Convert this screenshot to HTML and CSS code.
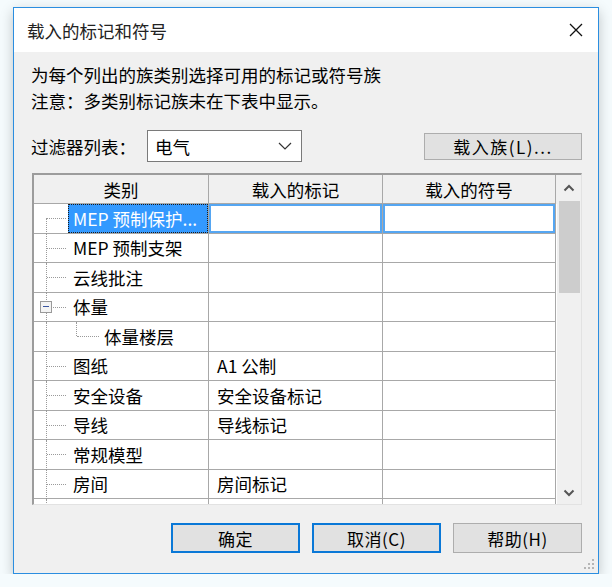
FILE: index.html
```html
<!DOCTYPE html>
<html lang="zh-CN">
<head>
    <meta charset="UTF-8">
    <title>载入的标记和符号</title>
    <link rel="stylesheet" href="styles.css">
</head>
<body>

    <div class="dialog">
        <!-- Barra de titulo -->
        <div class="titlebar">
            <span class="title">载入的标记和符号</span>
            <svg class="close" width="16" height="16" viewBox="0 0 16 16">
                <path d="M2 2 L14 14 M14 2 L2 14" stroke="#111" stroke-width="1.3" fill="none"/>
            </svg>
        </div>

        <div class="content">
            <p class="hint">为每个列出的族类别选择可用的标记或符号族</p>
            <p class="hint">注意：多类别标记族未在下表中显示。</p>

            <div class="filter-row">
                <label class="filter-label">过滤器列表：</label>
                <div class="select">
                    <span>电气</span>
                    <svg width="14" height="8" viewBox="0 0 14 8">
                        <path d="M1 1 L7 7 L13 1" stroke="#333" stroke-width="1.2" fill="none"/>
                    </svg>
                </div>
                <button class="btn btn-load">载入族(L)...</button>
            </div>

            <div class="grid-wrap">
                <div class="grid">
                    <div class="row head">
                        <div class="cell">类别</div>
                        <div class="cell">载入的标记</div>
                        <div class="cell">载入的符号</div>
                    </div>
                    <div class="row first">
                        <div class="cell tree"><span class="label sel">MEP 预制保护...</span></div>
                        <div class="cell edit"></div>
                        <div class="cell edit"></div>
                    </div>
                    <div class="row">
                        <div class="cell tree"><span class="label">MEP 预制支架</span></div>
                        <div class="cell"></div>
                        <div class="cell"></div>
                    </div>
                    <div class="row">
                        <div class="cell tree"><span class="label">云线批注</span></div>
                        <div class="cell"></div>
                        <div class="cell"></div>
                    </div>
                    <div class="row">
                        <div class="cell tree parent"><span class="toggle"></span><span class="label">体量</span></div>
                        <div class="cell"></div>
                        <div class="cell"></div>
                    </div>
                    <div class="row">
                        <div class="cell tree child"><span class="label">体量楼层</span></div>
                        <div class="cell"></div>
                        <div class="cell"></div>
                    </div>
                    <div class="row">
                        <div class="cell tree"><span class="label">图纸</span></div>
                        <div class="cell val">A1 公制</div>
                        <div class="cell"></div>
                    </div>
                    <div class="row">
                        <div class="cell tree"><span class="label">安全设备</span></div>
                        <div class="cell val">安全设备标记</div>
                        <div class="cell"></div>
                    </div>
                    <div class="row">
                        <div class="cell tree"><span class="label">导线</span></div>
                        <div class="cell val">导线标记</div>
                        <div class="cell"></div>
                    </div>
                    <div class="row">
                        <div class="cell tree"><span class="label">常规模型</span></div>
                        <div class="cell"></div>
                        <div class="cell"></div>
                    </div>
                    <div class="row">
                        <div class="cell tree"><span class="label">房间</span></div>
                        <div class="cell val">房间标记</div>
                        <div class="cell"></div>
                    </div>
                    <div class="row">
                        <div class="cell tree"><span class="label"></span></div>
                        <div class="cell"></div>
                        <div class="cell"></div>
                    </div>
                </div>

                <div class="scrollbar">
                    <div class="arrow up">
                        <svg width="12" height="8" viewBox="0 0 12 8"><path d="M1.5 6.5 L6 2 L10.5 6.5" stroke="#555" stroke-width="2" fill="none"/></svg>
                    </div>
                    <div class="thumb"></div>
                    <div class="track"></div>
                    <div class="arrow down">
                        <svg width="12" height="8" viewBox="0 0 12 8"><path d="M1.5 1.5 L6 6 L10.5 1.5" stroke="#555" stroke-width="2" fill="none"/></svg>
                    </div>
                </div>
            </div>

            <div class="actions">
                <button class="btn btn-default">确定</button>
                <button class="btn btn-default">取消(C)</button>
                <button class="btn">帮助(H)</button>
            </div>
        </div>

        <svg class="grip" width="12" height="12" viewBox="0 0 12 12">
            <rect x="9" y="1" width="2" height="2" fill="#b5b5b5"/>
            <rect x="5" y="5" width="2" height="2" fill="#b5b5b5"/>
            <rect x="9" y="5" width="2" height="2" fill="#b5b5b5"/>
            <rect x="1" y="9" width="2" height="2" fill="#b5b5b5"/>
            <rect x="5" y="9" width="2" height="2" fill="#b5b5b5"/>
            <rect x="9" y="9" width="2" height="2" fill="#b5b5b5"/>
        </svg>
    </div>

</body>
</html>
```

FILE: styles.css
```css
:root {
    --dialog-bg: #f0f0f0;
    --blue-border: #2b8ee0;
    --grid-line: #a8a8a8;
    --select-blue: #3399ff;
    --btn-bg: #e1e1e1;
}

* {
    box-sizing: border-box;
    margin: 0;
    padding: 0;
}

body {
    font-family: "Noto Sans CJK SC", "Noto Sans", sans-serif;
    font-size: 17.5px;
    color: #000;
    background-color: #f5fbfd;
    padding: 7px 0 0 13px;
}

.dialog {
    position: relative;
    width: 586px;
    height: 567px;
    background: var(--dialog-bg);
    border: 1px solid var(--blue-border);
    box-shadow: 0 4px 12px rgba(0, 0, 0, 0.22);
    display: flex;
    flex-direction: column;
}

.titlebar {
    height: 44px;
    background: #fff;
    display: flex;
    align-items: center;
    justify-content: space-between;
    padding: 0 14px 0 13px;
}

.title {
    color: #222;
}

.content {
    padding: 10px 16px 0 17px;
    display: flex;
    flex-direction: column;
}

.hint {
    line-height: 26px;
}

.filter-row {
    margin-top: 16px;
    height: 32px;
    display: flex;
    align-items: center;
}

.filter-label {
    width: 116px;
}

.select {
    width: 155px;
    height: 32px;
    background: #fff;
    border: 1px solid #7a7a7a;
    display: flex;
    align-items: center;
    justify-content: space-between;
    padding: 0 9px 0 7px;
}

.btn {
    font-family: inherit;
    font-size: 17px;
    color: #000;
    background: var(--btn-bg);
    border: 1px solid #adadad;
    letter-spacing: 0.5px;
}

.btn-load {
    margin-left: auto;
    width: 158px;
    height: 27px;
    letter-spacing: 1.5px;
}

/* tabla */
.grid-wrap {
    margin: 11px 0 0 1px;
    height: 332px;
    display: flex;
    border-top: 2px solid #9c9c9c;
    border-left: 2px solid #9c9c9c;
    border-right: 1px solid #e2e2e2;
    border-bottom: 1px solid #e2e2e2;
    background: #fff;
}

.grid {
    flex: 1;
    overflow: hidden;
}

.row {
    display: grid;
    grid-template-columns: 175px 174px 173px;
    height: 29.5px;
}

.cell {
    border-right: 1px solid var(--grid-line);
    border-bottom: 1px solid var(--grid-line);
    display: flex;
    align-items: center;
    white-space: nowrap;
    overflow: hidden;
}

.head {
    height: 29px;
    background: var(--dialog-bg);
}

.head .cell {
    justify-content: center;
}

.val {
    padding-left: 8px;
}

.edit {
    box-shadow: inset 0 0 0 2px #55a6f2;
}

.tree {
    position: relative;
    padding-left: 34px;
    overflow: visible;
}

.tree::before {
    content: "";
    position: absolute;
    left: 12px;
    top: 0;
    bottom: -1px;
    border-left: 1px dotted #9a9a9a;
}

.tree::after {
    content: "";
    position: absolute;
    left: 13px;
    top: 50%;
    width: 19px;
    border-top: 1px dotted #9a9a9a;
}

.first .tree::before {
    top: 50%;
}

.label {
    padding-left: 5px;
    position: relative;
    z-index: 1;
}

.sel {
    align-self: stretch;
    flex: 1;
    display: flex;
    align-items: center;
    background: var(--select-blue);
    color: #fff;
    outline: 1px dotted #1a1a1a;
    outline-offset: -1px;
}

.toggle {
    position: absolute;
    left: 6px;
    top: 50%;
    margin-top: -6px;
    width: 12px;
    height: 12px;
    border: 1px solid #9a9a9a;
    background: #f4f4f4;
    z-index: 2;
}

.toggle::after {
    content: "";
    position: absolute;
    left: 2px;
    top: 4px;
    width: 6px;
    border-top: 1.5px solid #3a55a0;
}

.child {
    padding-left: 65px;
}

.child .label {
    position: static;
}

.child .label::before {
    content: "";
    position: absolute;
    left: 42px;
    top: 0;
    height: 50%;
    border-left: 1px dotted #9a9a9a;
}

.child .label::after {
    content: "";
    position: absolute;
    left: 43px;
    top: 50%;
    width: 22px;
    border-top: 1px dotted #9a9a9a;
}

.child::after {
    display: none;
}

.scrollbar {
    width: 24px;
    background: var(--dialog-bg);
    display: flex;
    flex-direction: column;
}

.arrow {
    display: flex;
    align-items: center;
    justify-content: center;
}

.up {
    height: 26px;
}

.down {
    height: 22px;
}

.thumb {
    height: 92px;
    margin: 0 1px 0 2px;
    background: #cdcdcd;
}

.track {
    flex: 1;
}

.actions {
    margin-top: 18px;
    display: flex;
    justify-content: flex-end;
    gap: 12px;
}

.actions .btn {
    width: 129px;
    height: 30px;
}

.btn-default {
    border: 2px solid #0a78d7;
}

.grip {
    position: absolute;
    right: 3px;
    bottom: 3px;
}
```
